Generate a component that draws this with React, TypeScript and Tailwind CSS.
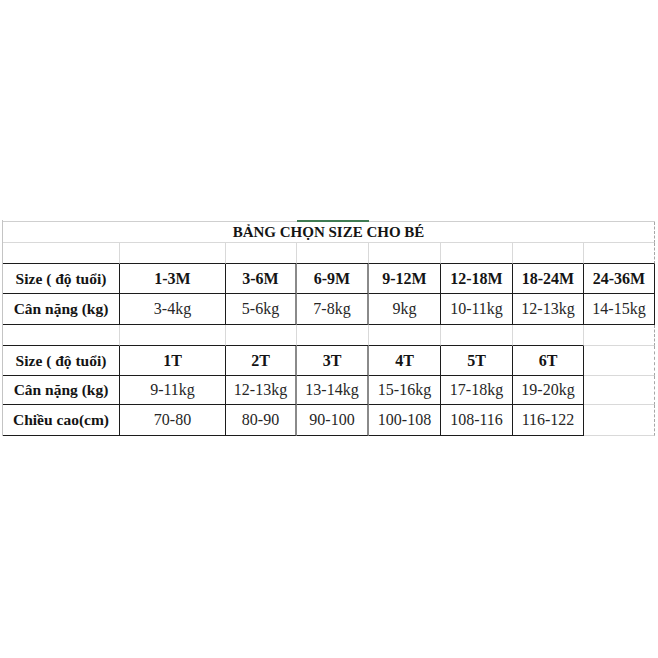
import * as React from 'react';

type Edge = 'black' | 'gray' | 'thick' | 'dash' | 'none';

type CellSpec = {
  text?: string;
  bold?: boolean;
  label?: boolean;
  r: Edge;
  b: 'black' | 'gray';
};

const COLS = [117, 106, 71, 72, 72, 72, 71, 71];

const RIGHT: Record<Edge, string> = {
  black: 'border-r border-r-[#1c1c1c]',
  gray: 'border-r border-r-[#d9d9d9]',
  thick: 'border-r-2 border-r-[#8a8a8a]',
  dash: 'border-r [border-right-style:dashed] border-r-[#a6a6a6]',
  none: '',
};

const BOTTOM = {
  black: 'border-b border-b-[#1c1c1c]',
  gray: 'border-b border-b-[#d9d9d9]',
};

function Cell({ w, h, spec }: { w: number; h: number; spec: CellSpec }) {
  return (
    <div
      className={`flex shrink-0 items-center justify-center ${RIGHT[spec.r]} ${BOTTOM[spec.b]} ${
        spec.bold ? 'font-bold text-[#141414]' : 'text-[#262626]'
      } ${spec.label ? 'text-[15.5px]' : 'text-[16px]'} whitespace-nowrap leading-none`}
      style={{ width: w, height: h }}
    >
      {spec.text}
    </div>
  );
}

function Row({ h, cells }: { h: number; cells: CellSpec[] }) {
  return (
    <div className="flex">
      {cells.map((c, i) => (
        <Cell key={i} w={COLS[i]} h={h} spec={c} />
      ))}
    </div>
  );
}

function emptyRow(bottomBlack: boolean, lastBottomBlack: boolean): CellSpec[] {
  return COLS.map((_, i) => ({
    r: i === 7 ? 'dash' : 'gray',
    b: i === 7 ? (lastBottomBlack ? 'black' : 'gray') : bottomBlack ? 'black' : 'gray',
  }));
}

function table1Row(label: string, values: string[], bold: boolean): CellSpec[] {
  return [label, ...values].map((text, i) => ({
    text,
    bold: i === 0 ? true : bold,
    label: i === 0,
    r: i === 2 || i === 3 ? 'thick' : 'black',
    b: 'black',
  }));
}

function table2Row(label: string, values: string[], bold: boolean): CellSpec[] {
  const cells: CellSpec[] = [label, ...values].map((text, i) => ({
    text,
    bold: i === 0 ? true : bold,
    label: i === 0,
    r: i === 2 || i === 3 ? 'thick' : 'black',
    b: 'black',
  }));
  cells.push({ r: 'dash', b: 'gray' });
  return cells;
}

export default function App() {
  return (
    <div className="h-[658px] w-[658px] bg-white pl-[2px] pt-[220px] font-['Liberation_Serif']">
      <div className="w-[653px] border-l border-l-[#c4c4c4]">
        <div className="flex h-[2px]">
          <div className="h-[2px] w-[294px] border-b border-b-[#cfcfcf]" />
          <div className="h-[2px] w-[72px] bg-[#3f7a52]" />
          <div className="h-[2px] w-[286px] border-b border-b-[#cfcfcf]" />
        </div>
        <div className="flex h-[21px] w-[652px] items-center justify-center border-b border-r border-b-[#d9d9d9] border-r-[#a6a6a6] [border-right-style:dashed] text-[15px] font-bold leading-none text-[#141414]">
          BẢNG CHỌN SIZE CHO BÉ
        </div>
        <Row h={21} cells={emptyRow(true, true)} />
        <Row
          h={30}
          cells={table1Row(
            'Size ( độ tuổi)',
            ['1-3M', '3-6M', '6-9M', '9-12M', '12-18M', '18-24M', '24-36M'],
            true,
          )}
        />
        <Row
          h={31}
          cells={table1Row(
            'Cân nặng (kg)',
            ['3-4kg', '5-6kg', '7-8kg', '9kg', '10-11kg', '12-13kg', '14-15kg'],
            false,
          )}
        />
        <Row h={21} cells={emptyRow(true, false)} />
        <Row
          h={30}
          cells={table2Row('Size ( độ tuổi)', ['1T', '2T', '3T', '4T', '5T', '6T'], true)}
        />
        <Row
          h={29}
          cells={table2Row(
            'Cân nặng (kg)',
            ['9-11kg', '12-13kg', '13-14kg', '15-16kg', '17-18kg', '19-20kg'],
            false,
          )}
        />
        <Row
          h={31}
          cells={table2Row(
            'Chiều cao(cm)',
            ['70-80', '80-90', '90-100', '100-108', '108-116', '116-122'],
            false,
          )}
        />
      </div>
    </div>
  );
}
